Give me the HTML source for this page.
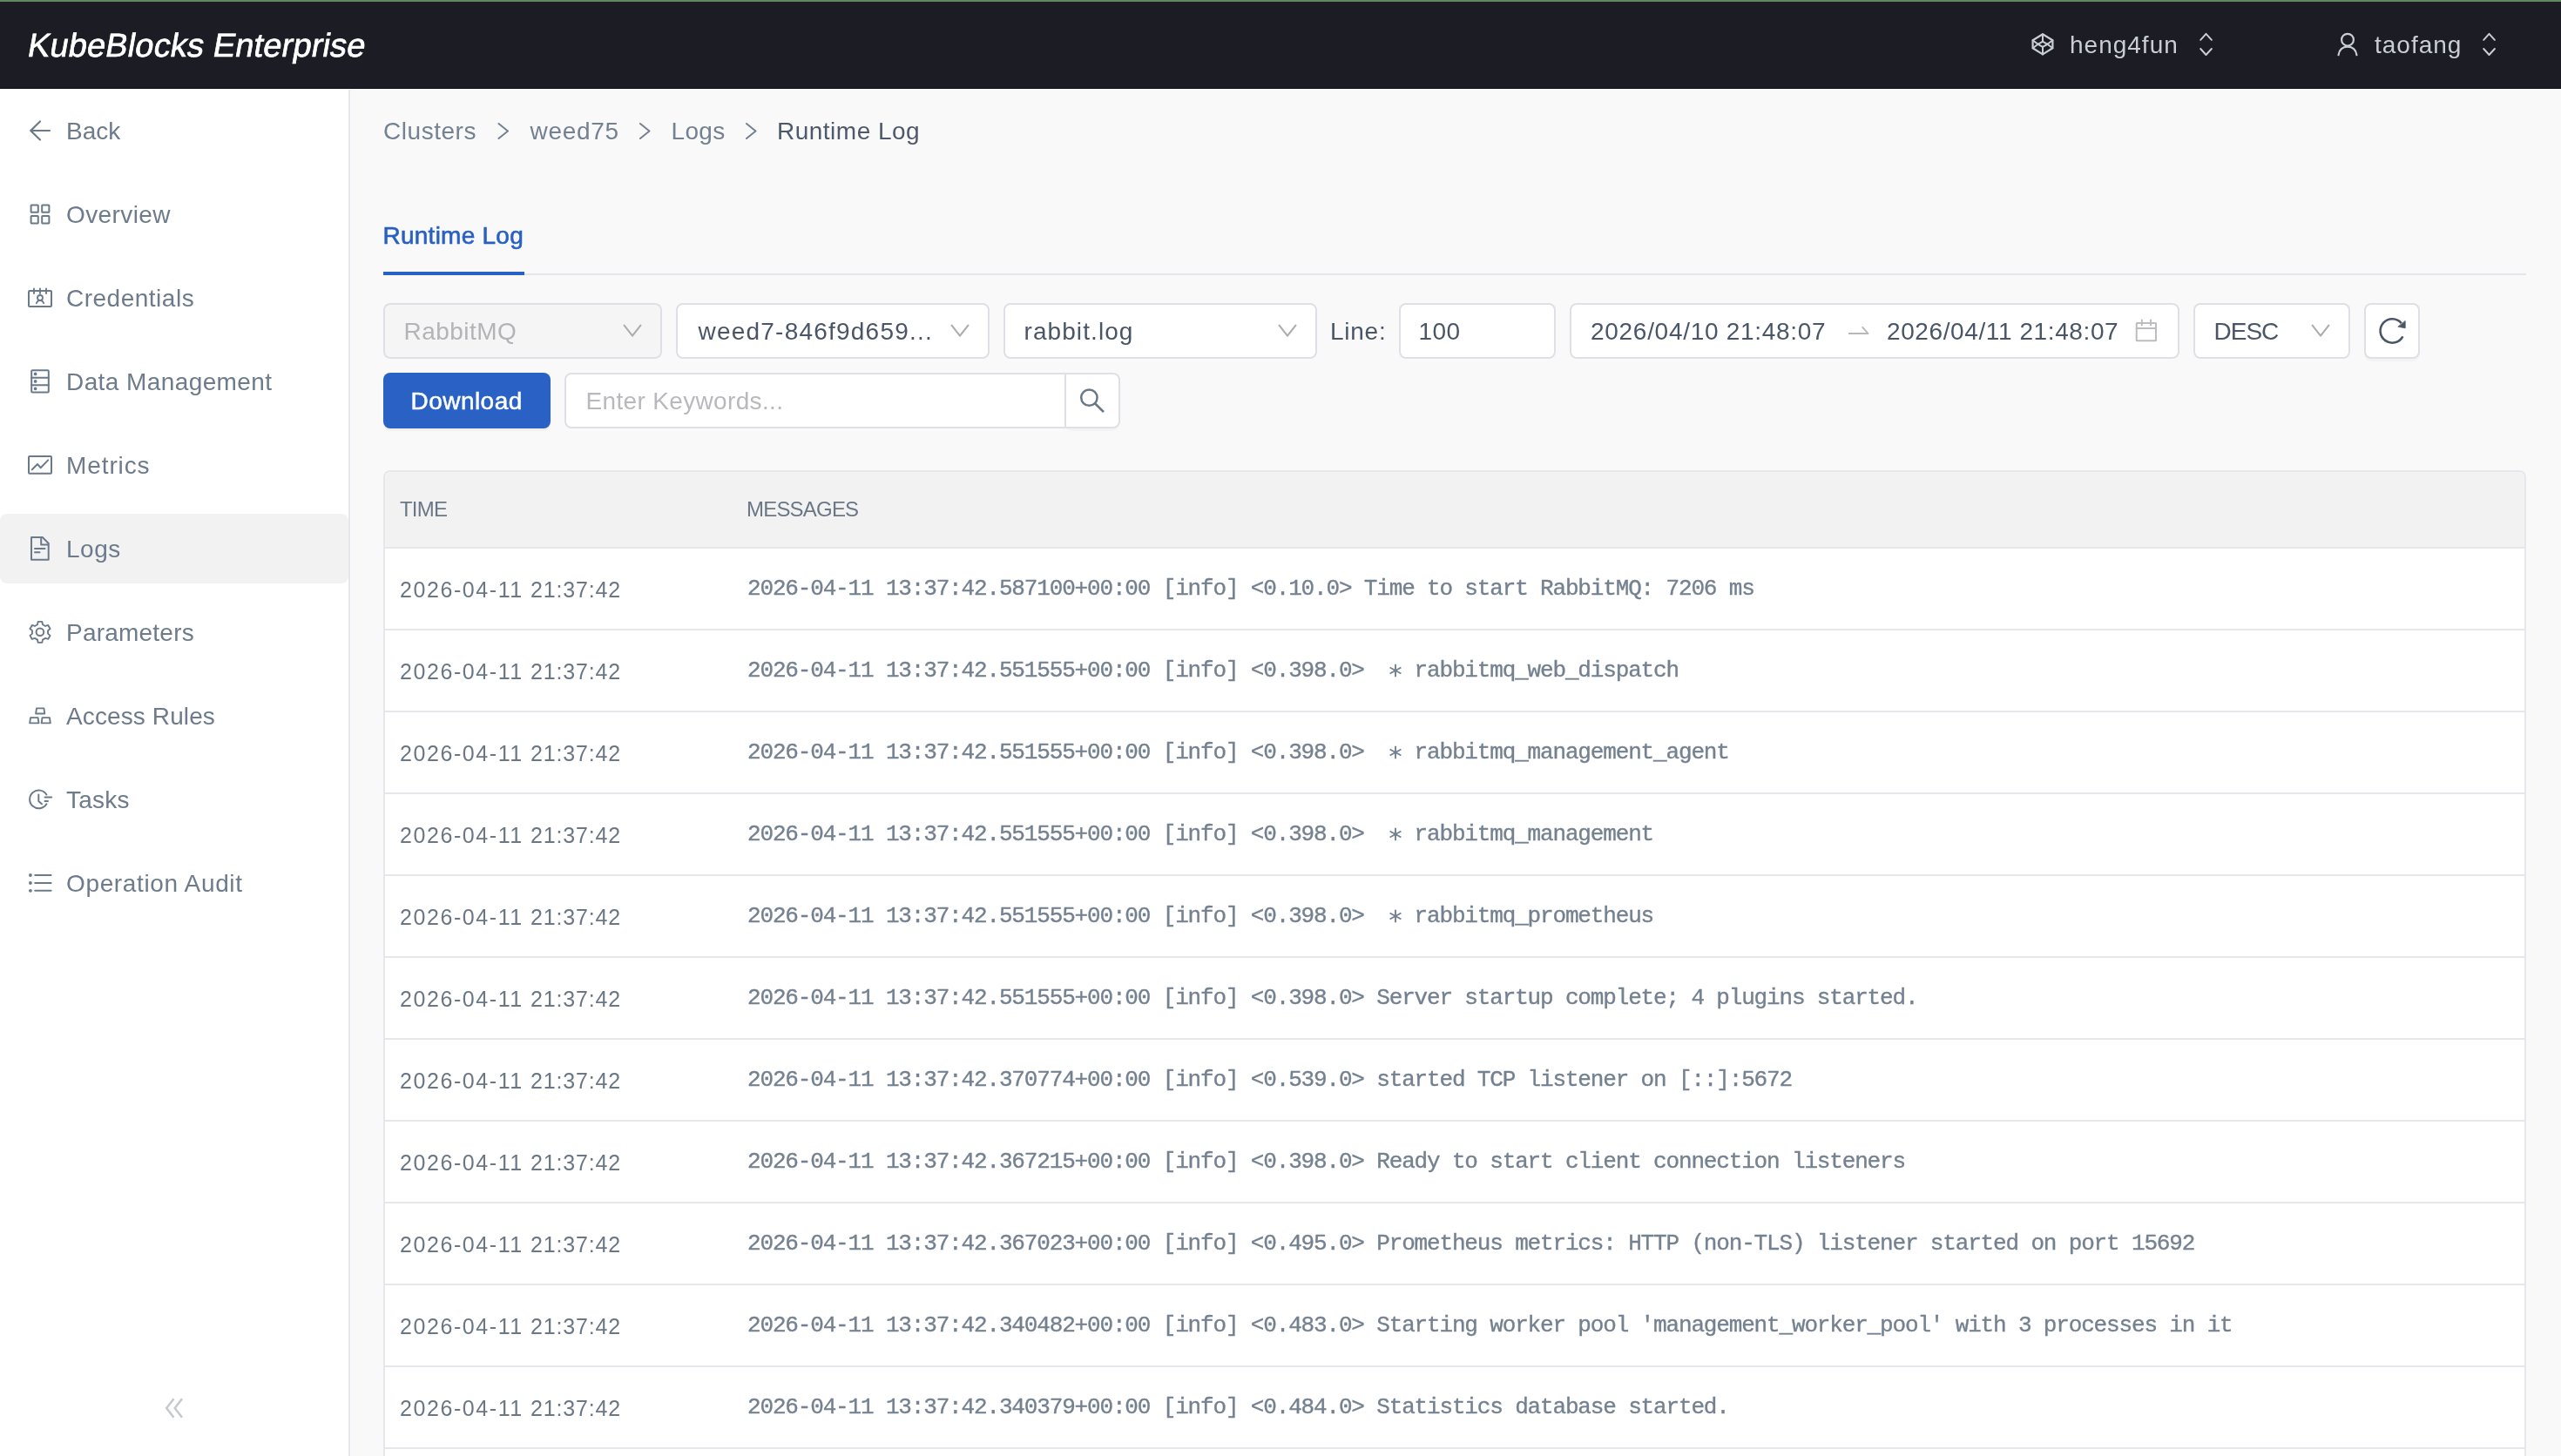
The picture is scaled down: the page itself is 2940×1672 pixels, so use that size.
<!DOCTYPE html>
<html><head><meta charset="utf-8">
<style>
*{margin:0;padding:0;box-sizing:border-box}
html,body{width:2940px;height:1672px;overflow:hidden;background:#f9f9fa;font-family:"Liberation Sans",sans-serif;position:relative}
body{will-change:transform}
svg{position:absolute;left:0;top:0;overflow:visible}
#hdr{position:absolute;left:0;top:0;width:2940px;height:102px;background:#1b1c24;border-top:2px solid #628862;border-bottom:1px solid #0d0e15}
#logo{position:absolute;left:30px;top:22px;font-size:38px;line-height:56px;color:#fff;letter-spacing:0.15px;-webkit-text-stroke:0.7px #fff;white-space:nowrap;transform:skewX(-10deg);transform-origin:0 42px}
.htxt{position:absolute;top:30px;font-size:28px;line-height:40px;color:#c9cdd4;white-space:nowrap;letter-spacing:1px}
#side{position:absolute;left:0;top:103px;width:402px;height:1569px;background:#fff;border-right:2px solid #e6e7eb}
#act{position:absolute;left:0;top:590px;width:400px;height:80px;background:#f2f2f3;border-radius:8px}
.nt{position:absolute;left:76px;font-size:28px;line-height:40px;color:#6d7b8b;white-space:nowrap}
.t28{position:absolute;font-size:28px;line-height:40px;white-space:nowrap}
.crumb{color:#748190}
#tab{color:#2860c4;-webkit-text-stroke:0.6px #2860c4}
#tabline{position:absolute;left:440px;top:314px;width:2460px;height:2px;background:#e5e6eb}
#tabbar{position:absolute;left:440px;top:312px;width:162px;height:4px;background:#2860c4}
.box{position:absolute;height:64px;border:2px solid #dfe0e5;border-radius:8px;background:#fff}
.val{color:#4a5668}
#dl{position:absolute;left:440px;top:428px;width:192px;height:64px;background:#2962c4;border-radius:8px;box-shadow:0 3px 0 rgba(0,0,0,0.035)}
#tbl{position:absolute;left:440px;top:540px;width:2460px;height:1140px;border:2px solid #e6e7eb;border-bottom:none;border-radius:8px 8px 0 0;background:#fff;overflow:hidden}
#thead{position:absolute;left:0;top:0;width:2456px;height:88px;background:#f2f2f3;border-bottom:2px solid #e6e7eb}
.th{position:absolute;top:23px;font-size:24px;line-height:40px;color:#6b7785;white-space:nowrap;letter-spacing:-0.8px}
.row{position:absolute;left:0;width:2456px;height:94px;border-bottom:2px solid #e6e7eb}
.tm{position:absolute;left:17px;top:27px;font-size:25px;line-height:40px;color:#6b7785;letter-spacing:1.58px;white-space:nowrap}
.tm2{left:167px;letter-spacing:0.82px}
.msg{position:absolute;left:416px;top:26px;font-family:"Liberation Mono",monospace;font-size:26px;letter-spacing:-1.1575px;line-height:40px;color:#748190;white-space:pre;-webkit-text-stroke:0.35px #748190}

.ast{position:absolute}

</style></head>
<body>
<div id="hdr"><div id="logo">KubeBlocks Enterprise</div><div class="htxt" style="left:2376px">heng4fun</div><div class="htxt" style="left:2726px">taofang</div></div>
<svg width="2940" height="102" style="z-index:2" fill="none" stroke="#c9cdd4" stroke-width="2.2" stroke-linejoin="round" stroke-linecap="round">
<path d="M2345,39.3L2356.4,46.2V55.2L2345,62.4L2333.6,55.2V46.2Z"/>
<path d="M2345,39.3V47.6M2345,53.9V62.4M2333.6,46.2L2339.6,50.8L2333.6,55.2M2356.4,46.2L2350.4,50.8L2356.4,55.2M2339.6,50.8L2345,47.6L2350.4,50.8L2345,53.9Z" stroke-width="2"/>
<circle cx="2695" cy="45.7" r="6.9"/>
<path d="M2684.5,63.2C2685.5,57 2689.5,53.6 2695,53.6C2700.5,53.6 2704.5,57 2705.5,63.2"/>
<path d="M2526.2,45.8L2532.5,38.8L2538.9,45.8M2526.2,56L2532.5,63L2538.9,56" stroke-width="2"/>
<path d="M2851.2,45.8L2857.5,38.8L2863.9,45.8M2851.2,56L2857.5,63L2863.9,56" stroke-width="2"/>
</svg>
<div id="side"></div>
<div id="act"></div>
<div class="nt" style="top:131px;letter-spacing:0px">Back</div>
<div class="nt" style="top:227px;letter-spacing:0.39px">Overview</div>
<div class="nt" style="top:323px;letter-spacing:0.5px">Credentials</div>
<div class="nt" style="top:419px;letter-spacing:0.41px">Data Management</div>
<div class="nt" style="top:515px;letter-spacing:0.9px">Metrics</div>
<div class="nt" style="top:611px;letter-spacing:0.5px">Logs</div>
<div class="nt" style="top:707px;letter-spacing:0.22px">Parameters</div>
<div class="nt" style="top:803px;letter-spacing:0.11px">Access Rules</div>
<div class="nt" style="top:899px;letter-spacing:0.25px">Tasks</div>
<div class="nt" style="top:995px;letter-spacing:0.64px">Operation Audit</div>
<svg width="402" height="1672" style="z-index:2" fill="none" stroke="#6b7a8b" stroke-width="2" stroke-linejoin="round" stroke-linecap="round">
<path d="M46,139.5L35.2,150L46,160.5M35.2,150H57" stroke-width="2.2"/>
<rect x="35.6" y="235.4" width="8.2" height="8.4" rx="0.6"/><rect x="48.2" y="235.4" width="8.2" height="8.4" rx="0.6"/>
<rect x="35.6" y="248" width="8.2" height="8.4" rx="0.6"/><rect x="48.2" y="248" width="8.2" height="8.4" rx="0.6"/>
<rect x="33" y="334" width="26" height="18" rx="1"/>
<path d="M39,331.5V337M46,331.5V337M53,331.5V337" stroke-width="1.9"/>
<circle cx="46" cy="342" r="3" stroke-width="1.8"/>
<path d="M41.8,348.2C42.8,345.5 44.2,344.8 46,344.8C47.8,344.8 49.2,345.5 50.2,348.2" stroke-width="1.8"/>
<rect x="36.2" y="425.2" width="19.6" height="25.3" rx="1"/>
<path d="M36.2,433.8H55.8M36.2,442.2H55.8"/>
<circle cx="40.6" cy="429.4" r="0.9" fill="#6b7a8b"/><circle cx="40.6" cy="437.9" r="0.9" fill="#6b7a8b"/><circle cx="40.6" cy="446.3" r="0.9" fill="#6b7a8b"/>
<rect x="33" y="524" width="26" height="19.8" rx="1"/>
<path d="M36.8,539.2L43,533L46.6,537.2L55.2,528.4"/>
<path d="M36,617H48.8L55.7,624V642.8H36Z"/>
<path d="M47.2,617.2V625.5H55.5M40,630H51.5M40,634.3H45.5"/>
<path d="M43.00,717.20L43.67,713.92L48.33,713.92L49.00,717.20L52.04,718.96L55.21,717.90L57.54,721.93L55.03,724.14L55.03,727.66L57.54,729.87L55.21,733.90L52.04,732.84L49.00,734.60L48.33,737.88L43.67,737.88L43.00,734.60L39.96,732.84L36.79,733.90L34.46,729.87L36.97,727.66L36.97,724.14L34.46,721.93L36.79,717.90L39.96,718.96Z" stroke-width="1.9"/>
<circle cx="45.9" cy="725.7" r="4.3"/>
<path d="M42,813.4H50.4L51.3,819.5H41.1Z M35,824.1H43.6L44.5,830.4H34.2Z M48.5,824.1H57L57.8,830.4H47.7Z" stroke-width="1.9"/>
<path d="M53.4,912.5A10.4,10.4 0 1 0 53.4,923.3" />
<path d="M44.3,912.5V920L48,923.3M51.5,915.6H59.2M51.5,920H55"/>
<path d="M40.2,1005H58.6M40.2,1014H58.6M40.2,1022.8H58.6"/>
<circle cx="34.9" cy="1005" r="0.9" fill="#6b7a8b"/><circle cx="34.9" cy="1014" r="0.9" fill="#6b7a8b"/><circle cx="34.9" cy="1022.8" r="0.9" fill="#6b7a8b"/>
<path d="M199.5,1606.3L191.2,1617L199.5,1627.7M209,1606.3L200.7,1617L209,1627.7" stroke="#c4c9cf" stroke-width="2.5" stroke-linecap="butt" stroke-linejoin="miter"/>
</svg>
<div class="t28 crumb" style="left:440px;top:131px;letter-spacing:0.54px">Clusters</div>
<div class="t28 crumb" style="left:608.5px;top:131px;letter-spacing:0.7px">weed75</div>
<div class="t28 crumb" style="left:770.5px;top:131px;letter-spacing:0.33px">Logs</div>
<div class="t28" style="left:892px;top:131px;color:#4e5a6a;letter-spacing:0.49px">Runtime Log</div>
<svg width="2940" height="500" fill="none" stroke="#748190" stroke-width="2" stroke-linecap="round" stroke-linejoin="round">
<path d="M572.5,142L583,150.5L572.5,159M735,142L745.5,150.5L735,159M857,142L867.5,150.5L857,159"/>
</svg>
<div id="tab" class="t28" style="left:439.5px;top:251px;letter-spacing:0.25px">Runtime Log</div>
<div id="tabline"></div><div id="tabbar"></div>
<div class="box" style="left:440px;top:348px;width:320px;background:#f5f5f6"></div>
<div class="t28" style="left:463.5px;top:361px;color:#b4b4b8;letter-spacing:0.47px">RabbitMQ</div>
<div class="box" style="left:776px;top:348px;width:360px"></div>
<div class="t28 val" style="left:801.5px;top:361px;letter-spacing:1.22px">weed7-846f9d659...</div>
<div class="box" style="left:1152px;top:348px;width:360px"></div>
<div class="t28 val" style="left:1175.5px;top:361px;letter-spacing:1.08px">rabbit.log</div>
<div class="t28 val" style="left:1527px;top:361px;letter-spacing:0.75px">Line:</div>
<div class="box" style="left:1606px;top:348px;width:180px"></div>
<div class="t28 val" style="left:1628.5px;top:361px;letter-spacing:0.37px">100</div>
<div class="box" style="left:1802px;top:348px;width:700px"></div>
<div class="t28 val" style="left:1826px;top:361px;letter-spacing:0.71px">2026/04/10 21:48:07</div>
<div class="t28 val" style="left:2166px;top:361px;letter-spacing:0.6px">2026/04/11 21:48:07</div>
<div class="box" style="left:2518px;top:348px;width:180px"></div>
<div class="t28 val" style="left:2541.5px;top:361px;letter-spacing:-1px">DESC</div>
<div class="box" style="left:2714px;top:348px;width:64px;box-shadow:0 3px 0 rgba(0,0,0,0.025)"></div>
<div id="dl"></div>
<div class="t28" style="left:471.5px;top:441px;color:#fff;-webkit-text-stroke:0.5px #fff;letter-spacing:0.46px">Download</div>
<div style="position:absolute;left:1222px;top:428px;width:62px;height:64px;border-radius:8px;box-shadow:0 3px 0 rgba(0,0,0,0.025)"></div><div class="box" style="left:648px;top:428px;width:638px"></div>
<div style="position:absolute;left:1222px;top:430px;width:2px;height:60px;background:#dfe0e5"></div>
<div class="t28" style="left:672.5px;top:441px;color:#b9b9bd;letter-spacing:0.34px">Enter Keywords...</div>
<svg width="2940" height="500" fill="none" stroke-linecap="round" stroke-linejoin="round">
<path d="M716.6,373.6L726.0,385.6L735.4,373.6M1092.6,373.6L1102.0,385.6L1111.4,373.6M1468.6,373.6L1478.0,385.6L1487.4,373.6M2654.6,373.6L2664.0,385.6L2673.4,373.6" stroke="#adadaf" stroke-width="2.1"/>
<path d="M2122.7,383H2144.5L2138.3,375.8" stroke="#b8b8bb" stroke-width="1.9"/>
<rect x="2452.7" y="371.1" width="22.3" height="20.2" rx="0.5" stroke="#bdbdc0" stroke-width="2"/>
<path d="M2452.7,377H2475M2458.8,367.5V373.6M2469,367.5V373.6" stroke="#bdbdc0" stroke-width="2"/>
<path d="M2758.4,386.4A13.7,13.7 0 1 1 2756.8,371.2" stroke="#4a5668" stroke-width="2.6" stroke-linecap="butt"/>
<path d="M2761.2,368.8L2761.2,376.8L2753.2,375.2Z" fill="#4a5668" stroke="#4a5668" stroke-width="0.8"/>
<circle cx="1250.4" cy="456.6" r="9.2" stroke="#6b7785" stroke-width="2.5"/>
<path d="M1257.3,463.5L1267,473.2" stroke="#6b7785" stroke-width="2.6" stroke-linecap="butt"/>
</svg>
<div id="tbl"><div id="thead"><div class="th" style="left:17px">TIME</div><div class="th" style="left:415px">MESSAGES</div></div>
<div class="row" style="top:88px"><div class="tm">2026-04-11</div><div class="tm tm2">21:37:42</div><div class="msg">2026-04-11 13:37:42.587100+00:00 [info] &lt;0.10.0&gt; Time to start RabbitMQ: 7206 ms</div></div>
<div class="row" style="top:182px"><div class="tm">2026-04-11</div><div class="tm tm2">21:37:42</div><div class="msg">2026-04-11 13:37:42.551555+00:00 [info] &lt;0.398.0&gt;    rabbitmq_web_dispatch</div><svg class="ast" width="16" height="20" style="left:1152px;top:36px" fill="none" stroke="#748190" stroke-width="1.9"><path d="M8,2.8V17.2M1.6,6.5L14.4,13.5M1.6,13.5L14.4,6.5"/></svg></div>
<div class="row" style="top:276px"><div class="tm">2026-04-11</div><div class="tm tm2">21:37:42</div><div class="msg">2026-04-11 13:37:42.551555+00:00 [info] &lt;0.398.0&gt;    rabbitmq_management_agent</div><svg class="ast" width="16" height="20" style="left:1152px;top:36px" fill="none" stroke="#748190" stroke-width="1.9"><path d="M8,2.8V17.2M1.6,6.5L14.4,13.5M1.6,13.5L14.4,6.5"/></svg></div>
<div class="row" style="top:370px"><div class="tm">2026-04-11</div><div class="tm tm2">21:37:42</div><div class="msg">2026-04-11 13:37:42.551555+00:00 [info] &lt;0.398.0&gt;    rabbitmq_management</div><svg class="ast" width="16" height="20" style="left:1152px;top:36px" fill="none" stroke="#748190" stroke-width="1.9"><path d="M8,2.8V17.2M1.6,6.5L14.4,13.5M1.6,13.5L14.4,6.5"/></svg></div>
<div class="row" style="top:464px"><div class="tm">2026-04-11</div><div class="tm tm2">21:37:42</div><div class="msg">2026-04-11 13:37:42.551555+00:00 [info] &lt;0.398.0&gt;    rabbitmq_prometheus</div><svg class="ast" width="16" height="20" style="left:1152px;top:36px" fill="none" stroke="#748190" stroke-width="1.9"><path d="M8,2.8V17.2M1.6,6.5L14.4,13.5M1.6,13.5L14.4,6.5"/></svg></div>
<div class="row" style="top:558px"><div class="tm">2026-04-11</div><div class="tm tm2">21:37:42</div><div class="msg">2026-04-11 13:37:42.551555+00:00 [info] &lt;0.398.0&gt; Server startup complete; 4 plugins started.</div></div>
<div class="row" style="top:652px"><div class="tm">2026-04-11</div><div class="tm tm2">21:37:42</div><div class="msg">2026-04-11 13:37:42.370774+00:00 [info] &lt;0.539.0&gt; started TCP listener on [::]:5672</div></div>
<div class="row" style="top:746px"><div class="tm">2026-04-11</div><div class="tm tm2">21:37:42</div><div class="msg">2026-04-11 13:37:42.367215+00:00 [info] &lt;0.398.0&gt; Ready to start client connection listeners</div></div>
<div class="row" style="top:840px"><div class="tm">2026-04-11</div><div class="tm tm2">21:37:42</div><div class="msg">2026-04-11 13:37:42.367023+00:00 [info] &lt;0.495.0&gt; Prometheus metrics: HTTP (non-TLS) listener started on port 15692</div></div>
<div class="row" style="top:934px"><div class="tm">2026-04-11</div><div class="tm tm2">21:37:42</div><div class="msg">2026-04-11 13:37:42.340482+00:00 [info] &lt;0.483.0&gt; Starting worker pool &#x27;management_worker_pool&#x27; with 3 processes in it</div></div>
<div class="row" style="top:1028px"><div class="tm">2026-04-11</div><div class="tm tm2">21:37:42</div><div class="msg">2026-04-11 13:37:42.340379+00:00 [info] &lt;0.484.0&gt; Statistics database started.</div></div>
<div class="row" style="top:1122px"><div class="tm">2026-04-11</div><div class="tm tm2">21:37:42</div><div class="msg">2026-04-11 13:37:42.340212+00:00 [info] &lt;0.398.0&gt; Starting rabbitmq_management</div></div>
</div>
<script>(function(){var w=window.innerWidth;if(w&&Math.abs(w-2940)>2){document.documentElement.style.zoom=(w/2940);}})();</script>
</body></html>
